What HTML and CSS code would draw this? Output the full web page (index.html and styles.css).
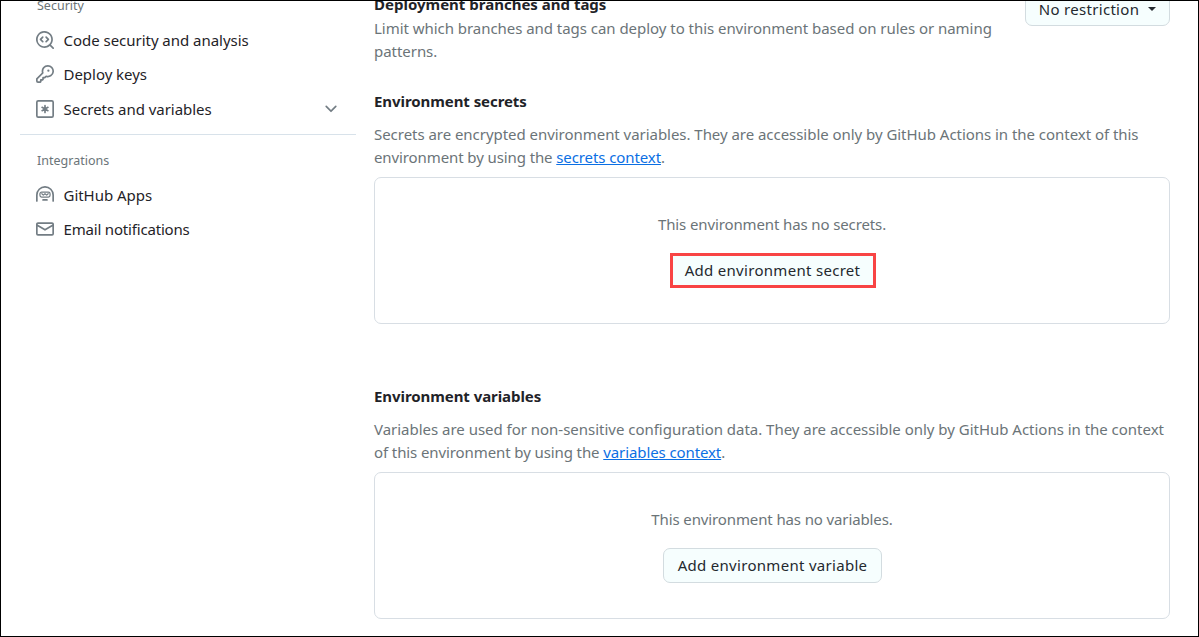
FILE: index.html
```html
<!DOCTYPE html>
<html lang="en">
<head>
<meta charset="utf-8">
<title>Environment settings</title>
<link rel="stylesheet" href="styles.css">
</head>
<body>
<div class="page">
  <nav class="sidebar">
    <h3 class="group-title group-title-cut">Security</h3>
    <a class="nav-item"><svg class="icon" viewBox="0 0 16 16"><path d="M8.47 4.97a.75.75 0 0 0 0 1.06L9.94 7.5 8.47 8.97a.75.75 0 1 0 1.06 1.06l2-2a.75.75 0 0 0 0-1.06l-2-2a.75.75 0 0 0-1.06 0ZM6.53 6.03a.75.75 0 0 0-1.06-1.06l-2 2a.75.75 0 0 0 0 1.06l2 2a.75.75 0 1 0 1.06-1.06L5.06 7.5l1.47-1.47Z"/><path d="M12.246 13.307a7.501 7.501 0 1 1 1.06-1.06l2.474 2.473a.749.749 0 1 1-1.06 1.06l-2.474-2.473ZM1.5 7.5a6.002 6.002 0 0 0 3.608 5.504 6.002 6.002 0 0 0 6.486-1.117.748.748 0 0 1 .292-.293A6 6 0 1 0 1.5 7.5Z"/></svg><span class="label">Code security and analysis</span></a>
    <a class="nav-item"><svg class="icon" viewBox="0 0 16 16"><path d="M10.5 0a5.499 5.499 0 1 1-1.288 10.848l-.932.932a.749.749 0 0 1-.53.22H7v.75a.749.749 0 0 1-.22.53l-.5.5a.749.749 0 0 1-.53.22H5v.75a.749.749 0 0 1-.22.53l-.5.5a.749.749 0 0 1-.53.22h-2A1.75 1.75 0 0 1 0 14.25v-2c0-.199.079-.389.22-.53l4.932-4.932A5.5 5.5 0 0 1 10.5 0Zm-4 5.5c-.001.431.069.86.205 1.269a.75.75 0 0 1-.181.768L1.5 12.56v1.69c0 .138.112.25.25.25h1.69l.06-.06v-1.19a.75.75 0 0 1 .75-.75h1.19l.06-.06v-1.19a.75.75 0 0 1 .75-.75h1.19l1.023-1.025a.75.75 0 0 1 .768-.18A4 4 0 1 0 6.5 5.5ZM11 6a1 1 0 1 1 0-2 1 1 0 0 1 0 2Z"/></svg><span class="label">Deploy keys</span></a>
    <a class="nav-item"><svg class="icon" viewBox="0 0 16 16"><g fill="none" stroke="currentColor" stroke-width="1.5"><rect x=".75" y=".75" width="14.5" height="14.5" rx="1.2"/><path stroke-linecap="round" d="M8 5v6M5.4 6.5l5.2 3M10.6 6.5l-5.2 3"/></g></svg><span class="label">Secrets and variables</span><svg class="icon chevron" viewBox="0 0 16 16"><path d="M12.78 5.22a.749.749 0 0 1 0 1.06l-4.25 4.25a.749.749 0 0 1-1.06 0L3.22 6.28a.749.749 0 1 1 1.06-1.06L8 8.939l3.72-3.719a.749.749 0 0 1 1.06 0Z"/></svg></a>
    <hr class="divider">
    <h3 class="group-title">Integrations</h3>
    <a class="nav-item"><svg class="icon" viewBox="0 0 16 16"><g fill="none" stroke="currentColor" stroke-linecap="round" stroke-linejoin="round"><path stroke-width="1.5" d="M.75 13.25V8a7.25 7.25 0 0 1 14.5 0v5.25M6.25 12.4h3.5"/><rect x="3.5" y="5.4" width="9" height="4.4" rx="1.5" stroke-width="1.1"/><path stroke-width="1.1" d="M5.2 6.9l1.3 1.2L8 6.9l1.5 1.2 1.3-1.2"/></g></svg><span class="label">GitHub Apps</span></a>
    <a class="nav-item"><svg class="icon" viewBox="0 0 16 16"><path d="M1.75 2h12.5c.966 0 1.75.784 1.75 1.75v8.5A1.75 1.75 0 0 1 14.25 14H1.75A1.75 1.75 0 0 1 0 12.25v-8.5C0 2.784.784 2 1.75 2ZM1.5 5.809v6.442c0 .138.112.25.25.25h12.5a.25.25 0 0 0 .25-.25V5.809L8.38 9.397a.75.75 0 0 1-.76 0L1.5 5.809Zm13-1.74v-.318a.25.25 0 0 0-.25-.25H1.75a.25.25 0 0 0-.25.25v.318L8 7.88Z"/></svg><span class="label label-tight">Email notifications</span></a>
  </nav>
  <main class="content">
    <section class="policy">
      <div class="policy-text">
        <h2 class="title">Deployment branches and tags</h2>
        <p class="text">Limit which branches and tags can deploy to this environment based on rules or naming<br>patterns.</p>
      </div>
      <button class="btn btn-select">No restriction<span class="caret"></span></button>
    </section>
    <section class="block">
      <h2 class="title">Environment secrets</h2>
      <p class="text">Secrets are encrypted environment variables. They are accessible only by GitHub Actions in the context of this<br><span class="text-tight">environment by using the <a class="link">secrets context</a>.</span></p>
      <div class="box">
        <p class="text text-empty">This environment has no secrets.</p>
        <button class="btn btn-marked">Add environment secret</button>
      </div>
    </section>
    <section class="block">
      <h2 class="title">Environment variables</h2>
      <p class="text text-wide">Variables are used for non-sensitive configuration data. They are accessible only by GitHub Actions in the context<br><span class="text-tight">of this environment by using the <a class="link">variables context</a>.</span></p>
      <div class="box">
        <p class="text text-empty">This environment has no variables.</p>
        <button class="btn">Add environment variable</button>
      </div>
    </section>
  </main>
</div>
</body>
</html>
```
FILE: styles.css
```css
* { box-sizing: border-box; }
body { margin: 0; font-family: "Noto Sans", sans-serif; color: #1f2328; background: #fff; }
h2, h3, p { margin: 0; }
.page { display: flex; width: 1199px; height: 637px; border: 1px solid #000; overflow: hidden; }
.sidebar { width: 336px; margin-left: 19px; }
.group-title { padding-left: 17px; font-size: 12.5px; font-weight: 400; line-height: 18px; color: #6b7478; }
.group-title-cut { margin: -4px 0 8px; }
.nav-item { display: flex; align-items: center; height: 34.3px; padding: 0 16px; font-size: 15px; }
.label { letter-spacing: -0.03px; }
.label-tight { letter-spacing: -0.18px; }
.icon { width: 18px; height: 18px; margin-right: 9.5px; fill: #737d84; color: #737d84; flex: none; }
.chevron { margin: 0 0 0 auto; }
.divider { height: 1px; margin: 8px 0 17px; border: 0; background: #d8e2ea; }
.group-title + .nav-item { margin-top: 8px; }
.content { width: 796px; margin-left: 18px; }
.policy { display: flex; justify-content: space-between; align-items: flex-start; height: 84px; }
.policy-text { margin-top: -9px; }
.title { font-size: 15px; font-weight: 700; line-height: 24px; letter-spacing: -0.07px; white-space: nowrap; }
.text { font-size: 15px; line-height: 22.8px; color: #6b7478; letter-spacing: -0.04px; white-space: nowrap; }
.text-wide { letter-spacing: -0.02px; }
.text-tight { letter-spacing: -0.1px; }
.text-empty { letter-spacing: -0.12px; }
.policy .title { letter-spacing: 0; }
.policy .text { margin-top: 1px; }
.link { color: #0b6fe4; text-decoration: underline; }
.block { height: 295.3px; padding-top: 4px; }
.block > .text { margin-top: 10px; }
.box { display: flex; flex-direction: column; align-items: center; height: 147px; margin-top: 8px; padding-top: 35px; border: 1px solid #d8dee4; border-radius: 7px; }
.btn { display: flex; align-items: center; justify-content: center; width: 219px; height: 35px; padding: 0; margin-top: 17px; font: 400 15px "Noto Sans", sans-serif; letter-spacing: 0.3px; color: #24292f; background: #f6fefe; border: 1px solid #d3dce0; border-radius: 7px; white-space: nowrap; }
.box .btn { margin-left: 1px; }
.box .btn-marked { width: 206px; margin-top: 18px; padding-bottom: 1px; border: 3px solid #f84444; border-radius: 0; }
.btn-select { width: 145px; margin-top: -10px; padding-top: 1px; }
.caret { margin-left: 9px; border: 4.5px solid transparent; border-top-color: #24292f; border-bottom: 0; }
```
